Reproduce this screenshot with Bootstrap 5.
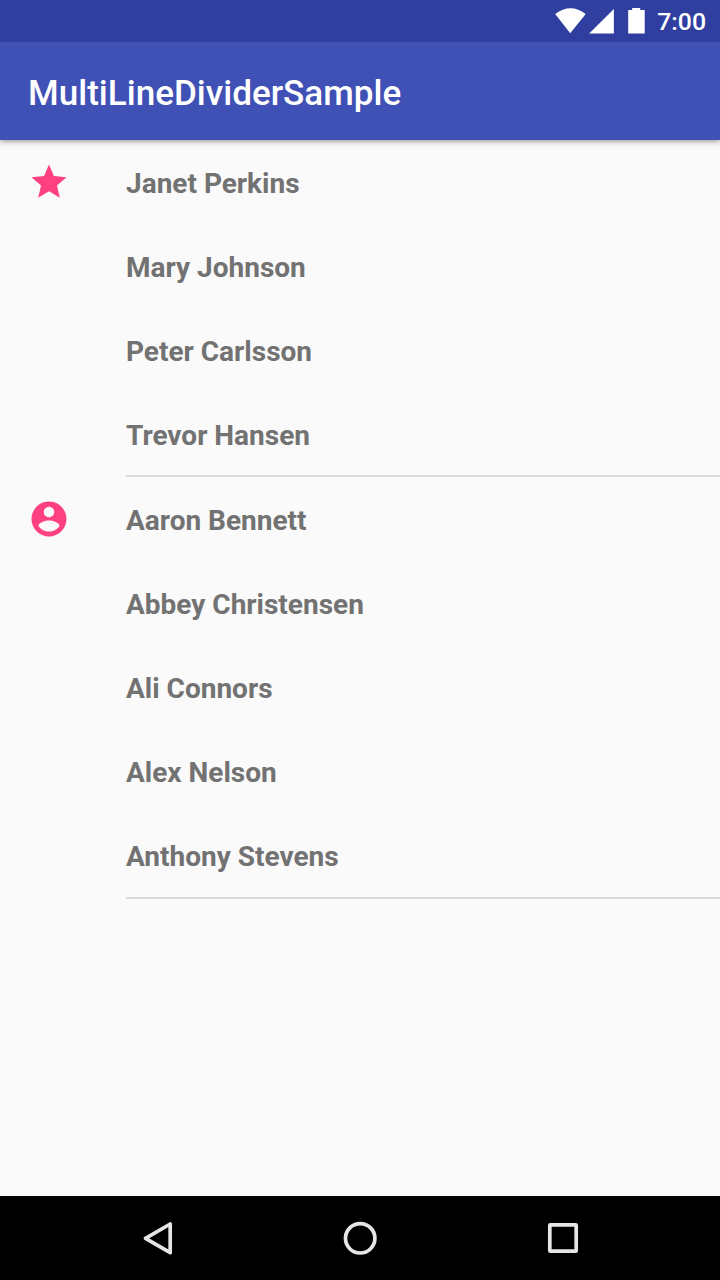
<!DOCTYPE html>
<html lang="en">
<head>
<meta charset="utf-8">
<meta name="viewport" content="width=device-width, initial-scale=1">
<title>MultiLineDividerSample</title>
<link href="https://cdn.jsdelivr.net/npm/bootstrap@5.3.0/dist/css/bootstrap.min.css" rel="stylesheet">
<style>
body{font-family:Roboto,"Noto Sans",sans-serif;background:#fafafa;color:#727272}
.status-bar{height:42px;background:#303f9f;color:#fff;font-size:24.8px;font-weight:500;line-height:44px;padding-right:14px;z-index:2}
.app-bar{height:98px;background:#3f51b5;padding:5px 0 0 28px;box-shadow:0 1px 6px rgba(0,0,0,.45);z-index:1}
.app-bar h1{font-size:35.1px;font-weight:500;line-height:1;color:#fff}
.contact-group{padding-left:28px}
.group-icon{width:98px;height:84px}
.contact{height:84px;padding-top:4px;font-size:28px;font-weight:700;line-height:1}
.contact-group:first-child .contact:last-child{height:83px;padding-top:5px}
.names{border-bottom:2px solid #dadada}
.system-nav{height:84px;background:#000}
</style>
</head>
<body>
<div class="vh-100 d-flex flex-column overflow-hidden">
<div class="status-bar d-flex justify-content-end flex-shrink-0 position-relative">
<svg width="103" height="42" viewBox="-.7 0 103 42" fill="#fff"><path d="M.5 14Q15.800 2.500 31 14L15.500 33.200Z"/><path d="M59.200 9V33.500H34.500Z"/><path d="M73.500 10H77.500V8H85.500V10H90V33.500H73.500Z"/></svg>
<span>7:00</span>
</div>
<header class="app-bar d-flex align-items-center flex-shrink-0 position-relative"><h1 class="m-0">MultiLineDividerSample</h1></header>
<main class="flex-grow-1">
<section class="contact-group d-flex">
<div class="group-icon d-flex align-items-center"><svg width="42" height="42" viewBox="0 0 24 24" fill="#ff4081"><path d="M12 17.270L18.180 21l-1.640-7.030L22 9.240l-7.190-.61L12 2 9.190 8.630 2 9.240l5.460 4.730L5.820 21z"/></svg></div>
<ul class="names list-unstyled flex-grow-1 mb-0"><li class="contact d-flex align-items-center">Janet Perkins</li><li class="contact d-flex align-items-center">Mary Johnson</li><li class="contact d-flex align-items-center">Peter Carlsson</li><li class="contact d-flex align-items-center">Trevor Hansen</li></ul>
</section>
<section class="contact-group d-flex">
<div class="group-icon d-flex align-items-center"><svg width="42" height="42" viewBox="0 0 24 24" fill="#ff4081"><path d="M12 2C6.480 2 2 6.480 2 12s4.480 10 10 10 10-4.480 10-10S17.520 2 12 2zm0 3c1.660 0 3 1.340 3 3s-1.340 3-3 3-3-1.340-3-3 1.340-3 3-3zm0 14.200c-2.500 0-4.710-1.280-6-3.220.03-1.990 4-3.080 6-3.080 1.990 0 5.970 1.090 6 3.080-1.290 1.940-3.500 3.220-6 3.220z"/></svg></div>
<ul class="names list-unstyled flex-grow-1 mb-0"><li class="contact d-flex align-items-center">Aaron Bennett</li><li class="contact d-flex align-items-center">Abbey Christensen</li><li class="contact d-flex align-items-center">Ali Connors</li><li class="contact d-flex align-items-center">Alex Nelson</li><li class="contact d-flex align-items-center">Anthony Stevens</li></ul>
</section>
</main>
<footer class="system-nav flex-shrink-0"><svg class="d-block" width="720" height="84" viewBox="0 0 720 84" fill="none" stroke="#e6e6e6" stroke-width="3.700" stroke-linejoin="round"><path d="M170.200 28V56.700L145.500 42.300Z"/><circle cx="360.200" cy="42.300" r="14.700"/><rect x="549.800" y="28.800" width="26.400" height="26.400" rx=".5"/></svg></footer>
</div>
<script src="https://cdn.jsdelivr.net/npm/bootstrap@5.3.0/dist/js/bootstrap.bundle.min.js"></script>
</body>
</html>
